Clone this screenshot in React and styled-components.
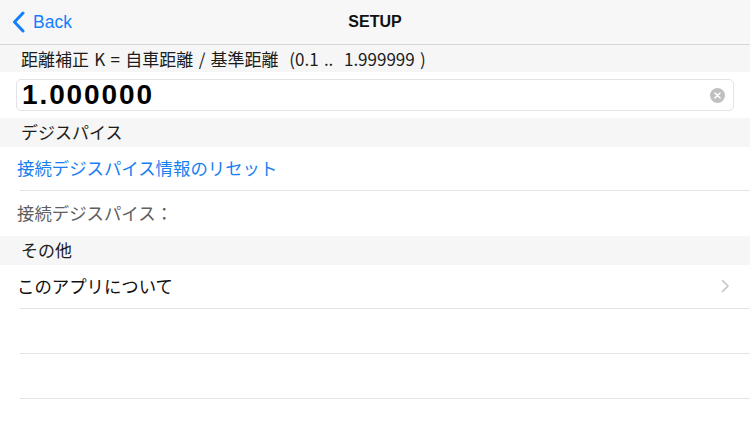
import React from "react";
import styled, { createGlobalStyle } from "styled-components";

const GlobalStyle = createGlobalStyle`
  html, body {
    margin: 0;
    padding: 0;
    background: #ffffff;
  }
  body {
    font-family: "Noto Sans CJK JP", "Noto Sans", sans-serif;
    -webkit-font-smoothing: antialiased;
  }
`;

const Page = styled.div`
  width: 750px;
  height: 422px;
  overflow: hidden;
  background: #fff;
`;

const NavBar = styled.div`
  height: 44px;
  background: #f7f7f7;
  border-bottom: 1px solid #d6d6d6;
  display: grid;
  grid-template-columns: 1fr auto 1fr;
  align-items: center;
`;

const BackButton = styled.div`
  display: flex;
  align-items: center;
  gap: 8px;
  padding-left: 12px;
  color: #157efb;
  font-family: "Liberation Sans", "Noto Sans", sans-serif;
  font-size: 17.5px;
`;

const Title = styled.div`
  font-family: "Liberation Sans", "Noto Sans", sans-serif;
  font-weight: bold;
  font-size: 16px;
  color: #111;
`;

const SectionHeader = styled.div`
  height: ${(p) => p.h}px;
  box-sizing: border-box;
  background: #f6f6f6;
  display: flex;
  align-items: center;
  padding: 0 0 ${(p) => (p.flat ? 0 : 2)}px 21px;
  font-size: ${(p) => p.size || 17}px;
  word-spacing: ${(p) => p.ws || 0}px;
  color: #1c1c1c;
`;

const FieldRow = styled.div`
  height: 46px;
  display: flex;
  align-items: center;
  padding: 0 16px;
`;

const Field = styled.div`
  flex: 1;
  height: 30px;
  border: 1px solid #e3e3e3;
  border-radius: 5px;
  display: flex;
  align-items: center;
  justify-content: space-between;
  padding: 0 8px 0 5px;
`;

const FieldValue = styled.span`
  font-family: "Liberation Sans", "Noto Sans", sans-serif;
  font-weight: bold;
  font-size: 28px;
  color: #000;
  letter-spacing: 1.9px;
`;

const ClearButton = styled.span`
  width: 15px;
  height: 15px;
  border-radius: 50%;
  background: #c0c0c0;
  display: flex;
  align-items: center;
  justify-content: center;
`;

const Row = styled.div`
  height: ${(p) => p.h || 44}px;
  box-sizing: border-box;
  display: flex;
  align-items: center;
  justify-content: space-between;
  padding: 0 20px 3px 17px;
  font-size: 17.4px;
  color: ${(p) => p.color || "#111"};
  position: relative;
  &::after {
    content: "";
    display: ${(p) => (p.sep ? "block" : "none")};
    position: absolute;
    left: 20px;
    right: 0;
    bottom: 0;
    height: 1px;
    background: #e4e4e4;
  }
`;

const Chevron = () => (
  <svg width="9" height="14" viewBox="0 0 9 14">
    <path d="M1.5 1.5 L7 7 L1.5 12.5" fill="none" stroke="#c4c4c9" strokeWidth="1.6" strokeLinecap="round" strokeLinejoin="round" />
  </svg>
);

export default function App() {
  return (
    <Page>
      <GlobalStyle />
      <NavBar>
        <BackButton>
          <svg width="13" height="22" viewBox="0 0 13 22">
            <path d="M11 2 L2.5 11 L11 20" fill="none" stroke="#157efb" strokeWidth="3" strokeLinecap="round" strokeLinejoin="round" />
          </svg>
          Back
        </BackButton>
        <Title>SETUP</Title>
        <div />
      </NavBar>

      <SectionHeader h={27} size={17} ws={1.5} flat>
        距離補正 K = 自車距離 / 基準距離 &nbsp;(0.1 .. &nbsp;1.999999 )
      </SectionHeader>
      <FieldRow>
        <Field>
          <FieldValue>1.000000</FieldValue>
          <ClearButton>
            <svg width="7" height="7" viewBox="0 0 7 7">
              <path d="M1 1 L6 6 M6 1 L1 6" stroke="#fff" strokeWidth="1.6" strokeLinecap="round" />
            </svg>
          </ClearButton>
        </Field>
      </FieldRow>

      <SectionHeader h={29}>デジスパイス</SectionHeader>
      <Row sep color="#1a7ff0">接続デジスパイス情報のリセット</Row>
      <Row h={45} color="#5f5f5f">接続デジスパイス：</Row>

      <SectionHeader h={29}>その他</SectionHeader>
      <Row sep>
        このアプリについて
        <Chevron />
      </Row>
      <Row sep h={45} />
      <Row sep h={45} />
    </Page>
  );
}
